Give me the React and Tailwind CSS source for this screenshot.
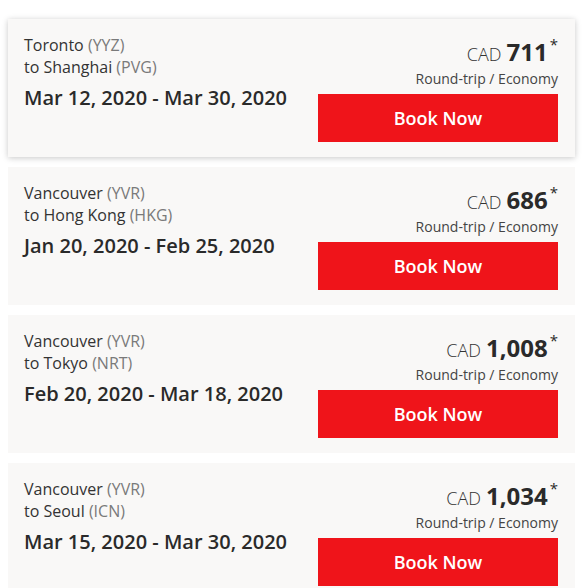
import React from "react";

const deals = [
  { from: "Toronto", fromCode: "YYZ", to: "Shanghai", toCode: "PVG", dates: "Mar 12, 2020 - Mar 30, 2020", price: "711", active: true },
  { from: "Vancouver", fromCode: "YVR", to: "Hong Kong", toCode: "HKG", dates: "Jan 20, 2020 - Feb 25, 2020", price: "686" },
  { from: "Vancouver", fromCode: "YVR", to: "Tokyo", toCode: "NRT", dates: "Feb 20, 2020 - Mar 18, 2020", price: "1,008" },
  { from: "Vancouver", fromCode: "YVR", to: "Seoul", toCode: "ICN", dates: "Mar 15, 2020 - Mar 30, 2020", price: "1,034" },
];

function Card({ d }) {
  return (
    <div
      className={
        "flex justify-between bg-[#f9f8f7] pl-4 pr-[17px] pt-[15px] h-[138px] shrink-0 " +
        (d.active ? "shadow-[0_1px_6px_rgba(0,0,0,0.22)]" : "")
      }
    >
      <div className="flex flex-col">
        <div className="text-[16px] leading-[22px] text-[#333]">
          {d.from} <span className="text-[#7a7a7a]">({d.fromCode})</span>
        </div>
        <div className="text-[16px] leading-[22px] text-[#333]">
          to {d.to} <span className="text-[#7a7a7a]">({d.toCode})</span>
        </div>
        <div className="mt-[6px] text-[20px] leading-[28px] font-semibold text-[#2a2a2a]">{d.dates}</div>
      </div>
      <div className="flex flex-col items-end">
        <div className="flex items-start leading-none text-[#2a2a2a] mt-[6px]">
          <span className="text-[18px] font-light self-end mb-[1px] mr-[5px] text-[#333]">CAD</span>
          <span className="text-[24px] font-bold leading-[24px]">{d.price}</span>
          <span className="text-[15px] ml-[2px] -mt-[3px]">*</span>
        </div>
        <div className="mt-[5px] text-[14px] leading-[20px] text-[#444]">Round-trip / Economy</div>
        <button className="mt-[5px] w-[240px] h-[48px] bg-[#ef141a] text-white text-[18px] font-semibold">
          Book Now
        </button>
      </div>
    </div>
  );
}

export default function App() {
  return (
    <div
      className="w-[585px] h-[588px] overflow-hidden bg-white pt-[19px] pl-2 pr-[10px] flex flex-col gap-[10px]"
      style={{ fontFamily: '"Open Sans", sans-serif' }}
    >
      {deals.map((d, i) => (
        <Card key={i} d={d} />
      ))}
    </div>
  );
}
